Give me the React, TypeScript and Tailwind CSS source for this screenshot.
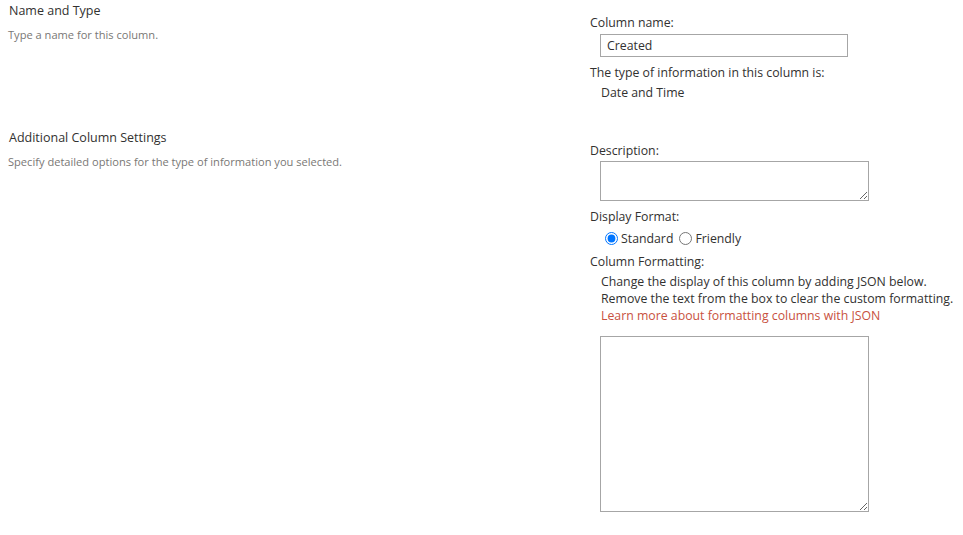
import React from "react";

export default function App() {
  const font = { fontFamily: '"Open Sans", "Noto Sans", sans-serif' };
  return (
    <div className="w-[963px] h-[535px] bg-white text-[#323130] overflow-hidden" style={font}>
      {/* Section 1 */}
      <div className="flex h-[127px]">
        <div className="w-[590px] pl-[9px] pt-[2px]">
          <div className="text-[12.5px] leading-[17px] text-[#323130]">Name and Type</div>
          <div className="mt-[7px] -ml-[1px] text-[11.1px] leading-[17px] text-[#797775]">Type a name for this column.</div>
        </div>
        <div className="flex-1 pt-[14px]">
          <div className="text-[12.3px] leading-[17px]">Column name:</div>
          <div className="pl-[10px] mt-[3px]">
            <input
              readOnly
              value="Created"
              className="block w-[248px] h-[23px] border border-[#a6a6a6] px-[6px] text-[12.3px] text-[#323130] outline-none"
              style={font}
            />
          </div>
          <div className="mt-[7px] text-[12.3px] leading-[17px]">The type of information in this column is:</div>
          <div className="mt-[3px] pl-[11px] text-[12.3px] leading-[17px]">Date and Time</div>
        </div>
      </div>
      {/* Section 2 */}
      <div className="flex">
        <div className="w-[590px] pl-[9px] pt-[2px]">
          <div className="text-[12.5px] leading-[17px]">Additional Column Settings</div>
          <div className="mt-[7px] -ml-[1px] text-[11.1px] leading-[17px] text-[#797775]">
            Specify detailed options for the type of information you selected.
          </div>
        </div>
        <div className="flex-1 pt-[15px]">
          <div className="text-[12.3px] leading-[17px]">Description:</div>
          <div className="pl-[10px] mt-[2px]">
            <textarea
              readOnly
              className="block w-[269px] h-[40px] border border-[#a6a6a6] outline-none"
            />
          </div>
          <div className="mt-[7px] text-[12.3px] leading-[17px]">Display Format:</div>
          <div className="mt-[5px] pl-[15px] flex items-center text-[12.3px] leading-[17px]">
            <label className="flex items-center gap-[3px]">
              <input type="radio" name="fmt" defaultChecked className="m-0 w-[13px] h-[13px]" />
              <span>Standard</span>
            </label>
            <label className="flex items-center gap-[3px] ml-[6px]">
              <input type="radio" name="fmt" className="m-0 w-[13px] h-[13px]" />
              <span>Friendly</span>
            </label>
          </div>
          <div className="mt-[6px] text-[12.3px] leading-[17px]">Column Formatting:</div>
          <div className="mt-[3px] pl-[11px] text-[12.3px] leading-[17px]">
            <div>Change the display of this column by adding JSON below.</div>
            <div>Remove the text from the box to clear the custom formatting.</div>
            <div className="text-[#c8513e]">Learn more about formatting columns with JSON</div>
          </div>
          <div className="pl-[10px] mt-[12px]">
            <textarea
              readOnly
              className="block w-[269px] h-[176px] border border-[#a6a6a6] outline-none"
            />
          </div>
        </div>
      </div>
    </div>
  );
}
